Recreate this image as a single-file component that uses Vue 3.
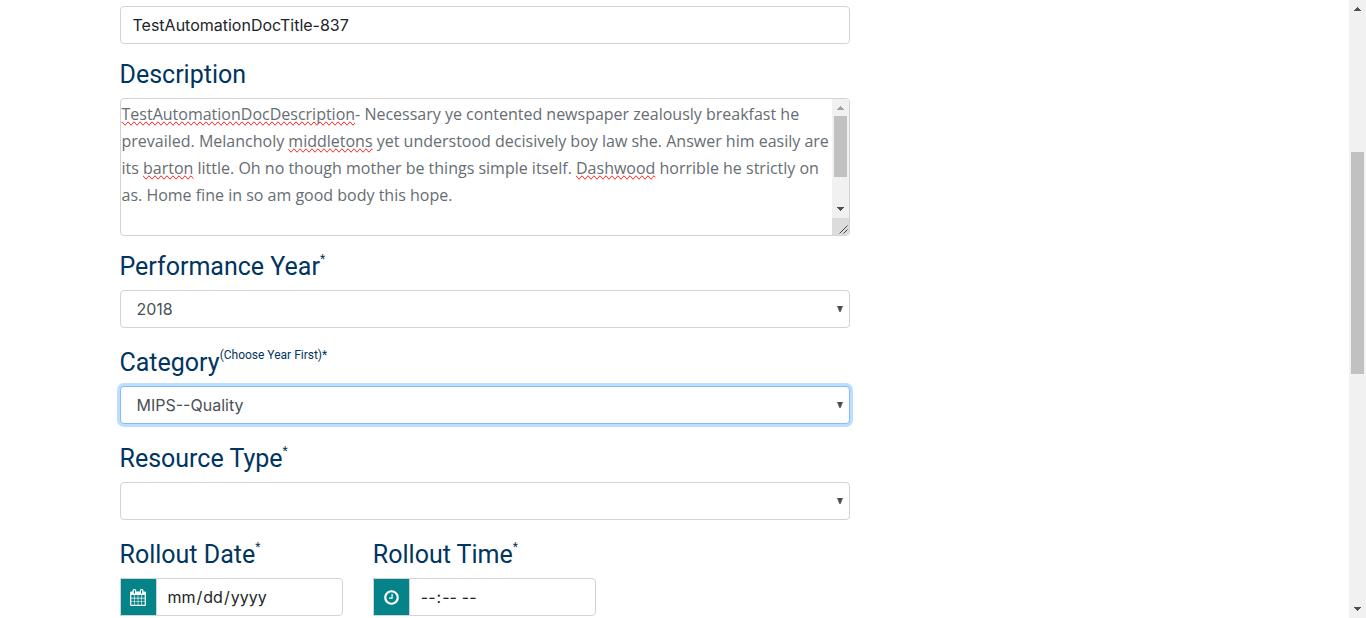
<script setup>
import { ref } from 'vue'

const title = ref('TestAutomationDocTitle-837')
const year = ref('2018')
const category = ref('MIPS--Quality')
const resourceType = ref('')

// Each line is a list of text runs; runs marked `bad` get a spelling underline.
const lines = [
  [{ t: 'TestAutomationDocDescription', bad: true }, { t: '- Necessary ye contented newspaper zealously breakfast he' }],
  [{ t: 'prevailed. Melancholy ' }, { t: 'middletons', bad: true }, { t: ' yet understood decisively boy law she. Answer him easily are' }],
  [{ t: 'its ' }, { t: 'barton', bad: true }, { t: ' little. Oh no though mother be things simple itself. ' }, { t: 'Dashwood', bad: true }, { t: ' horrible he strictly on' }],
  [{ t: 'as. Home fine in so am good body this hope.' }]
]
const description = ref(lines.map((l) => l.map((r) => r.t).join('')).join('\n'))
</script>

<template>
  <div class="page">
    <main class="content">
      <div class="container">
        <form class="form" @submit.prevent>
          <input id="title" v-model="title" class="control title" type="text" aria-label="Title" spellcheck="false" />

          <label class="label" for="description">Description</label>
          <div class="area">
            <div class="area-text">
              <div class="marks" aria-hidden="true">
                <div v-for="(line, i) in lines" :key="i"><span v-for="(run, j) in line" :key="j" :class="{ bad: run.bad }">{{ run.t }}</span></div>
              </div>
              <textarea id="description" v-model="description" spellcheck="false"></textarea>
            </div>
            <div class="area-bar" aria-hidden="true">
              <svg class="arrow dim" width="7" height="4" viewBox="0 0 7 4" shape-rendering="crispEdges"><path d="M3 0h1v1h1v1h1v1h1v1H0V3h1V2h1V1h1z" /></svg>
              <div class="area-thumb"></div>
              <svg class="arrow low" width="7" height="4" viewBox="0 0 7 4" shape-rendering="crispEdges"><path d="M0 0h7v1H6v1H5v1H4v1H3V3H2V2H1V1H0z" /></svg>
              <div class="grip">
                <svg width="17" height="17" viewBox="0 0 17 17"><path d="M7.500 15.500l8-8M11.500 15.500l4-4" fill="none" stroke="#444" /></svg>
              </div>
            </div>
          </div>

          <label class="label" for="year">Performance Year<sup>*</sup></label>
          <div class="select">
            <select id="year" v-model="year" class="control">
              <option>2018</option>
            </select>
            <svg class="caret" width="6" height="6" viewBox="0 0 6 6"><path d="M0 0h6L3.500 6h-1z" /></svg>
          </div>

          <label class="label" for="category">Category<sup>(Choose Year First)*</sup></label>
          <div class="select">
            <select id="category" v-model="category" class="control active">
              <option>MIPS--Quality</option>
            </select>
            <svg class="caret" width="6" height="6" viewBox="0 0 6 6"><path d="M0 0h6L3.500 6h-1z" /></svg>
          </div>

          <label class="label" for="resource">Resource Type<sup>*</sup></label>
          <div class="select">
            <select id="resource" v-model="resourceType" class="control">
              <option value=""></option>
            </select>
            <svg class="caret" width="6" height="6" viewBox="0 0 6 6"><path d="M0 0h6L3.500 6h-1z" /></svg>
          </div>

          <div class="row">
            <div>
              <label class="label" for="date">Rollout Date<sup>*</sup></label>
              <div class="group">
                <span class="addon">
                  <svg width="16" height="17" viewBox="0 0 1664 1792"><path d="M128 1664h288v-288h-288v288zm352 0h320v-288h-320v288zm-352-352h288v-320h-288v320zm352 0h320v-320h-320v320zm-352-384h288v-288h-288v288zm736 736h320v-288h-320v288zm-384-736h320v-288h-320v288zm768 736h288v-288h-288v288zm-384-352h320v-320h-320v320zm-352-864v-288q0-13-9.500-22.500t-22.500-9.500h-64q-13 0-22.500 9.500t-9.500 22.500v288q0 13 9.500 22.500t22.500 9.500h64q13 0 22.500-9.500t9.500-22.500zm736 864h288v-320h-288v320zm-384-384h320v-288h-320v288zm384 0h288v-288h-288v288zm32-480v-288q0-13-9.500-22.500t-22.500-9.500h-64q-13 0-22.500 9.500t-9.500 22.500v288q0 13 9.500 22.500t22.500 9.500h64q13 0 22.500-9.500t9.500-22.500zm384-64v1280q0 52-38 90t-90 38h-1408q-52 0-90-38t-38-90v-1280q0-52 38-90t90-38h128v-96q0-66 47-113t113-47h64q66 0 113 47t47 113v96h384v-96q0-66 47-113t113-47h64q66 0 113 47t47 113v96h128q52 0 90 38t38 90z" /></svg>
                </span>
                <input id="date" class="control" type="date" />
              </div>
            </div>
            <div>
              <label class="label" for="time">Rollout Time<sup>*</sup></label>
              <div class="group">
                <span class="addon">
                  <svg width="17" height="17" viewBox="0 0 1792 1792"><path d="M1024 544v448q0 14-9 23t-23 9h-320q-14 0-23-9t-9-23v-64q0-14 9-23t23-9h224v-352q0-14 9-23t23-9h64q14 0 23 9t9 23zm416 352q0-148-73-273t-198-198-273-73-273 73-198 198-73 273 73 273 198 198 273 73 273-73 198-198 73-273zm224 0q0 209-103 385.500t-279.500 279.500-385.500 103-385.500-103-279.500-279.500-103-385.500 103-385.500 279.500-279.500 385.500-103 385.500 103 279.500 279.500 103 385.500z" /></svg>
                </span>
                <input id="time" class="control" type="time" />
              </div>
            </div>
          </div>
        </form>
      </div>
    </main>
    <div class="page-bar" aria-hidden="true">
      <svg class="arrow" width="7" height="4" viewBox="0 0 7 4" shape-rendering="crispEdges"><path d="M3 0h1v1h1v1h1v1h1v1H0V3h1V2h1V1h1z" /></svg>
      <div class="track"><div class="thumb"></div></div>
      <svg class="arrow" width="7" height="4" viewBox="0 0 7 4" shape-rendering="crispEdges"><path d="M0 0h7v1H6v1H5v1H4v1H3V3H2V2H1V1H0z" /></svg>
    </div>
  </div>
</template>

<style>
body {
  background: #fff;
}
</style>

<style scoped>
* {
  box-sizing: border-box;
}
.page {
  display: flex;
  min-height: 100vh;
  font: 16px/27px Roboto, sans-serif;
  color: #212529;
}
.content {
  flex: 1;
  min-width: 0;
}
.container {
  max-width: 1140px;
  margin: 0 auto;
  padding: 6px 15px 0;
}
.form {
  width: calc(66.6667% - 10px);
}
.control {
  display: block;
  width: 100%;
  height: 38px;
  margin: 0;
  padding: 0 12px;
  border: 1px solid #ced4da;
  border-radius: 4px;
  background: #fff;
  color: #212529;
  font: 16px/24px Inter, sans-serif;
  appearance: none;
  outline: none;
}
.label {
  display: block;
  margin: 17px 0 5px;
  color: #003560;
  font-size: 25px;
  line-height: 36px;
}
.title + .label,
.area + .label {
  margin-top: 13px;
}
sup {
  font-size: 12px;
  line-height: 0;
  vertical-align: 12px;
}
.area {
  display: flex;
  height: 138px;
  border: 1px solid #d3d3d3;
  border-radius: 4px;
  overflow: hidden;
}
.area-text {
  display: grid;
  flex: 1;
  min-width: 0;
}
.marks,
textarea {
  grid-area: 1 / 1;
  width: 100%;
  margin: 0;
  padding: 2px 1px;
  border: 0;
  font: 16px/27px "Open Sans", sans-serif;
  white-space: pre;
  overflow: hidden;
}
.marks {
  color: transparent;
}
.bad {
  text-decoration: spelling-error;
}
textarea {
  background: transparent;
  color: #666d73;
  outline: none;
  resize: none;
}
.area-bar {
  display: flex;
  flex-direction: column;
  align-items: center;
  width: 17px;
  padding-top: 7px;
  background: #f1f1f1;
}
.arrow {
  flex: none;
  fill: #505050;
}
.dim {
  fill: #a3a3a3;
}
.area-thumb {
  width: 13px;
  height: 61px;
  margin-top: 6px;
  background: #c1c1c1;
}
.low {
  margin-top: auto;
}
.grip {
  width: 17px;
  height: 17px;
  margin-top: 7px;
  background: #dcdcdc;
}
.grip svg {
  display: block;
}
.select {
  display: grid;
  align-items: center;
}
.select > * {
  grid-area: 1 / 1;
}
.select .control {
  padding: 0 16px;
  color: #495057;
}
.caret {
  justify-self: end;
  margin-right: 7px;
  fill: #495057;
  pointer-events: none;
}
.control.active {
  border-color: #80bdff;
  box-shadow: 0 0 0 3px #bfdeff;
}
.row {
  display: grid;
  grid-template-columns: repeat(3, 1fr);
  gap: 30px;
}
.row > * {
  min-width: 0;
}
.group {
  display: flex;
}
.addon {
  display: flex;
  flex: none;
  align-items: center;
  justify-content: center;
  width: 36px;
  border: 1px solid #ced4da;
  border-right: 0;
  background: #048489;
}
.addon svg {
  fill: #fff;
}
.group .control {
  flex: 1;
  min-width: 0;
  padding: 0 10px;
  border-radius: 0 4px 4px 0;
}
.control::-webkit-calendar-picker-indicator {
  display: none;
}
.page-bar {
  display: flex;
  flex: none;
  flex-direction: column;
  align-items: center;
  width: 17px;
  padding: 7px 0;
  background: #f1f1f1;
}
.track {
  flex: 1;
  width: 13px;
  margin: 6px 0;
}
.thumb {
  height: 38%;
  margin-top: 135px;
  background: #c1c1c1;
}
</style>
